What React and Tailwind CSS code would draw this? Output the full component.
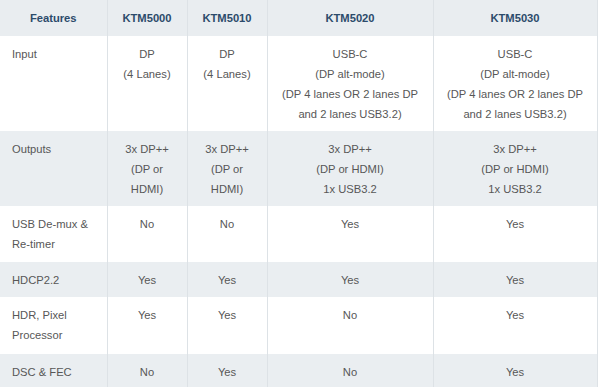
import React from "react";

const models = ["KTM5000", "KTM5010", "KTM5020", "KTM5030"];

const rows = [
  {
    h: "h-[95px]",
    label: ["Input"],
    cells: [
      ["DP", "(4 Lanes)"],
      ["DP", "(4 Lanes)"],
      ["USB-C", "(DP alt-mode)", "(DP 4 lanes OR 2 lanes DP", "and 2 lanes USB3.2)"],
      ["USB-C", "(DP alt-mode)", "(DP 4 lanes OR 2 lanes DP", "and 2 lanes USB3.2)"],
    ],
  },
  {
    h: "h-[75px]",
    label: ["Outputs"],
    cells: [
      ["3x DP++", "(DP or", "HDMI)"],
      ["3x DP++", "(DP or", "HDMI)"],
      ["3x DP++", "(DP or HDMI)", "1x USB3.2"],
      ["3x DP++", "(DP or HDMI)", "1x USB3.2"],
    ],
  },
  { h: "h-[56px]", label: ["USB De-mux &", "Re-timer"], cells: [["No"], ["No"], ["Yes"], ["Yes"]] },
  { h: "h-[35px]", label: ["HDCP2.2"], cells: [["Yes"], ["Yes"], ["Yes"], ["Yes"]] },
  { h: "h-[57px]", label: ["HDR, Pixel", "Processor"], cells: [["Yes"], ["Yes"], ["No"], ["Yes"]] },
  { h: "h-[33px]", label: ["DSC & FEC"], cells: [["No"], ["Yes"], ["No"], ["Yes"]] },
];

const widths = ["w-[107px]", "w-[80px]", "w-[80px]", "w-[166px]", "w-[164px]"];

export default function App() {
  return (
    <div
      className="w-[600px] h-[391px] bg-white overflow-hidden"
      style={{ fontFamily: '"Liberation Sans", Arial, sans-serif' }}
    >
      <table className="w-[597px] table-fixed border-collapse text-[11.2px] leading-[20px] text-[#575757]">
        <colgroup>
          {widths.map((w, i) => (
            <col key={i} className={w} />
          ))}
        </colgroup>
        <thead>
          <tr className="h-[36px] bg-[#e9edf0]">
            <th className="border-r border-[#dde2e6] font-bold text-[#2c4b6b] text-center align-middle">
              Features
            </th>
            {models.map((m) => (
              <th
                key={m}
                className="border-r border-[#dde2e6] font-bold text-[#2c4b6b] text-center align-middle"
              >
                {m}
              </th>
            ))}
          </tr>
        </thead>
        <tbody>
          {rows.map((row, r) => (
            <tr key={r} className={`${row.h} ${r % 2 === 1 ? "bg-[#eaeef1]" : "bg-white"}`}>
              <td className="border-r border-[#dde2e6] pl-3 pr-2 pt-2 pb-0 align-top text-left">
                {row.label.map((l, k) => (
                  <div key={k}>{l}</div>
                ))}
              </td>
              {row.cells.map((c, i) => (
                <td
                  key={i}
                  className="border-r border-[#dde2e6] pt-2 pb-0 px-1 align-top text-center"
                >
                  {c.map((l, k) => (
                    <div key={k} className="whitespace-nowrap">
                      {l}
                    </div>
                  ))}
                </td>
              ))}
            </tr>
          ))}
        </tbody>
      </table>
    </div>
  );
}
